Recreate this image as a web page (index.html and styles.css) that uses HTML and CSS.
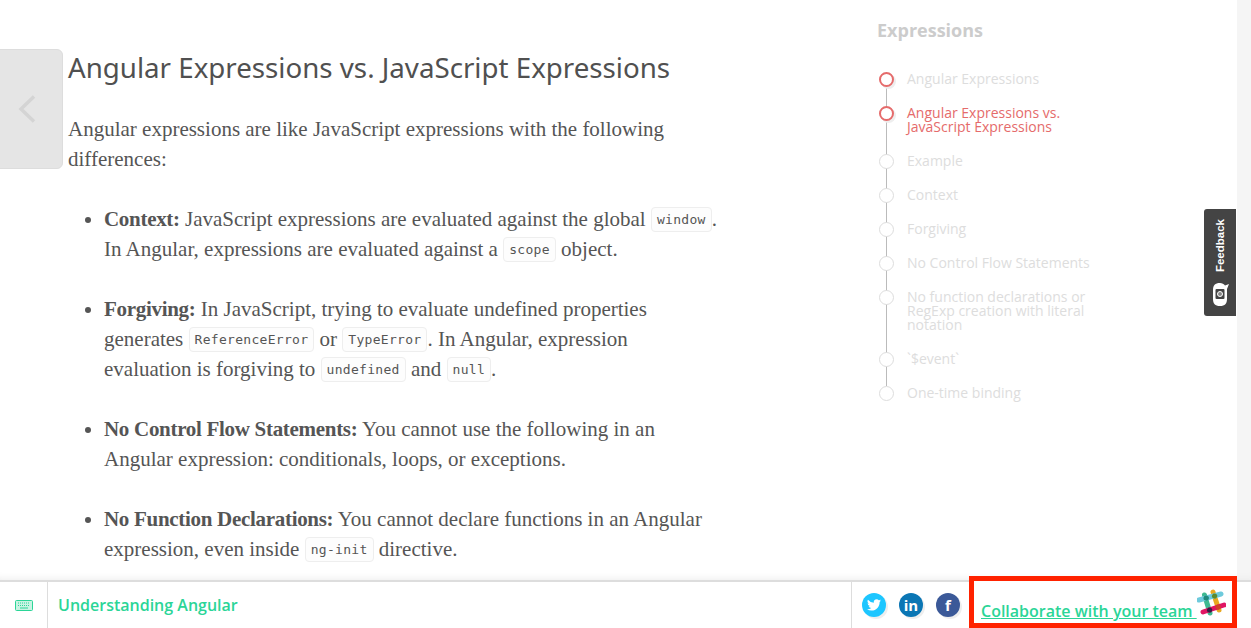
FILE: index.html
```html
<!DOCTYPE html>
<html lang="en">
<head>
<meta charset="utf-8">
<title>Angular Expressions</title>
<link rel="stylesheet" href="styles.css">
</head>
<body>
<div class="page">
  <div class="content">
    <a class="prev" href="#"><svg width="18" height="28" viewBox="0 0 18 28"><path d="M16 1.500 3 14l13 12.500" fill="none" stroke="#d4d4d4" stroke-width="3.500"/></svg></a>
    <main class="article">
      <h2>Angular Expressions vs. JavaScript Expressions</h2>
      <p>Angular expressions are like JavaScript expressions with the following<br>differences:</p>
      <ul>
        <li><strong>Context:</strong> JavaScript expressions are evaluated against the global <code>window</code>.<br>In Angular, expressions are evaluated against a <code>scope</code> object.</li>
        <li><strong>Forgiving:</strong> In JavaScript, trying to evaluate undefined properties<br>generates <code>ReferenceError</code> or <code>TypeError</code>. In Angular, expression<br>evaluation is forgiving to <code>undefined</code> and <code>null</code>.</li>
        <li><strong>No Control Flow Statements:</strong> You cannot use the following in an<br>Angular expression: conditionals, loops, or exceptions.</li>
        <li><strong>No Function Declarations:</strong> You cannot declare functions in an Angular<br>expression, even inside <code>ng-init</code> directive.</li>
      </ul>
    </main>
    <aside class="toc">
      <h3>Expressions</h3>
      <ol class="steps">
        <li class="step done">Angular Expressions</li>
        <li class="step current">Angular Expressions vs. JavaScript Expressions</li>
        <li class="step">Example</li>
        <li class="step">Context</li>
        <li class="step">Forgiving</li>
        <li class="step">No Control Flow Statements</li>
        <li class="step">No function declarations or RegExp creation with literal notation</li>
        <li class="step">`$event`</li>
        <li class="step">One-time binding</li>
      </ol>
    </aside>
    <a class="feedback" href="#">
      <span class="feedback-text">Feedback</span>
      <svg width="17" height="25" viewBox="0 0 17 25"><path d="M8 1C3 1 1 3.500 1 8v9c0 4.500 2 7 7 7s7-2.500 7-7V7l2-5-4 1.500C12 2 10 1 8 1Z" fill="#fff"/><rect x="3.500" y="7" width="9" height="10" rx="1" fill="#444"/><circle cx="8" cy="12" r="2.500" fill="#888" stroke="#fff" stroke-width="1"/></svg>
    </a>
  </div>
  <footer class="bar">
    <div class="kbd">
      <svg width="18" height="11" viewBox="0 0 18 11"><rect x=".5" y=".5" width="17" height="10" rx="1" fill="#c9f3e3" stroke="#2bd597"/><path d="M3 3h12M3 5.500h12" stroke="#2bd597" stroke-dasharray="1 1"/><path d="M5 8h8" stroke="#2bd597"/></svg>
    </div>
    <div class="course">Understanding Angular</div>
    <div class="social">
      <a class="soc tw" href="#"><svg width="14" height="12" viewBox="0 0 24 20"><path d="M24 2.400a10 10 0 0 1-2.800.8A5 5 0 0 0 23.300.5a10 10 0 0 1-3.100 1.200 4.900 4.900 0 0 0-8.400 4.500A14 14 0 0 1 1.700.9a4.900 4.900 0 0 0 1.500 6.600 5 5 0 0 1-2.200-.6 4.900 4.900 0 0 0 3.900 4.900 5 5 0 0 1-2.200.1 4.900 4.900 0 0 0 4.600 3.400A10 10 0 0 1 0 17.300 14 14 0 0 0 7.500 19.500c9.100 0 14.100-7.500 14.100-14v-.6A10 10 0 0 0 24 2.400Z" fill="#fff"/></svg></a>
      <a class="soc in" href="#">in</a>
      <a class="soc fb" href="#">f</a>
    </div>
    <div class="collab">
      <a href="#">Collaborate with your team </a>
      <svg class="slack" width="29" height="29" viewBox="0 0 29 29">
        <g stroke-width="5" stroke-linecap="round" fill="none">
          <path d="M7.500 7 13 25" stroke="#3eb991"/>
          <path d="M16 4l6 18" stroke="#e9a820"/>
          <path d="M6 24l21-7" stroke="#e01563"/>
          <path d="M2 12 24 6" stroke="#6ecadc"/>
          <path d="M9 10l.4.100" stroke="#1f8a7a"/>
          <path d="M17.500 8l.2.100" stroke="#5c8a2e"/>
          <path d="M12.500 22l.2.100" stroke="#3a1a45"/>
          <path d="M21 19l.2.100" stroke="#d0402a"/>
        </g>
      </svg>
    </div>
  </footer>
</div>
</body>
</html>
```
FILE: styles.css
```css
*, *::before, *::after { box-sizing: border-box; }
html, body { margin: 0; height: 100%; overflow: hidden; }
body { background: #fff; color: #555; }
.page { display: flex; flex-direction: column; height: 628px; width: 1251px; position: relative; background: linear-gradient(#f5f5f5, #f5f5f5) right top / 14px 100% no-repeat #fff; }
.content { flex: 1; display: flex; position: relative; min-height: 0; overflow: hidden; box-shadow: inset 0 -8px 8px -8px #e8e8e8; }
.prev { position: absolute; left: -6px; top: 49px; width: 69px; height: 120px; background: #e5e5e5; border: 1px solid #ddd; border-radius: 6px; display: flex; align-items: center; justify-content: center; padding-right: 4px; }
.article { width: 720px; margin-left: 68px; flex: none; font-family: "Liberation Serif", serif; font-size: 21px; line-height: 30px; }
h2 { font-family: "Noto Sans", sans-serif; font-weight: 400; font-size: 27.700px; line-height: 40px; margin: 47px 0 0; color: #505050; white-space: nowrap; }
.article p { margin: 27px 0 0; }
ul { margin: 30px 0 0; padding: 0 0 0 36px; width: 680px; }
li { margin: 0 0 30px; }
strong { font-weight: 700; letter-spacing: -.3px; }
code { font-family: "DejaVu Sans Mono", monospace; font-size: 13px; line-height: 1; letter-spacing: .3px; border: 1px solid #eee; border-radius: 4px; padding: 4px 5px; background: #fdfdfd; vertical-align: 2px; }
.toc { margin-left: 89px; width: 230px; flex: none; font-family: "Open Sans", sans-serif; }
.toc h3 { margin: 19px 0 0; font-size: 18px; line-height: 22px; font-weight: 700; color: #ccc; }
.steps { list-style: none; margin: 31px 0 0; padding: 0; }
.step { position: relative; margin: 0; padding: 0 0 20px 30px; font-size: 14px; line-height: 14px; color: #ddd; width: 215px; }
.step::before { content: ""; position: absolute; left: 2px; top: 0; width: 15px; height: 15px; border-radius: 50%; border: 1px solid #ddd; background: #fff; z-index: 1; }
.step::after { content: ""; position: absolute; left: 9px; top: 0; bottom: 0; width: 1px; background: #bbb; }
.step:last-child::after { display: none; }
.step.done::before, .step.current::before { border: 2px solid #e56b6b; box-shadow: 2px 2px 0 #eee; }
.step.current { color: #e56b6b; }
.feedback { position: absolute; right: 15px; top: 209px; width: 32px; height: 107px; background: #444; border-radius: 3px 0 0 3px; display: flex; flex-direction: column; align-items: center; justify-content: flex-end; padding-bottom: 9px; gap: 10px; text-decoration: none; }
.feedback-text { writing-mode: vertical-rl; transform: rotate(180deg); color: #fff; font: 700 11.500px "Liberation Sans", sans-serif; }
.bar { flex: none; height: 48px; display: flex; align-items: stretch; border-top: 2px solid #ddd; background: #fff; }
.kbd { width: 48px; border-right: 1px solid #ddd; display: flex; align-items: center; justify-content: center; }
.course { flex: 1; padding-left: 10px; font: 600 16px/46px "Open Sans", sans-serif; color: #2bd597; }
.social { display: flex; align-items: center; gap: 13px; padding: 0 9px 0 10px; border-left: 1px solid #ddd; }
.soc { width: 24px; height: 24px; border-radius: 50%; display: flex; align-items: center; justify-content: center; color: #fff; font: 700 15px "Open Sans", sans-serif; text-decoration: none; box-shadow: 2px 2px 0 #eee; }
.tw { background: #1dc6ff; }
.in { background: #0b76b4; }
.fb { background: #3b5998; }
.collab { width: 268px; height: 52px; margin-top: -6px; border: 5px solid #ff2200; background: #fff; display: flex; align-items: flex-end; padding: 0 0 1px 7px; position: relative; flex: none; margin-right: 14px; }
.collab a { font: 600 16px/22px "Open Sans", sans-serif; color: #2bd597; white-space: pre; }
.slack { position: absolute; right: 6px; top: 7px; }
```
